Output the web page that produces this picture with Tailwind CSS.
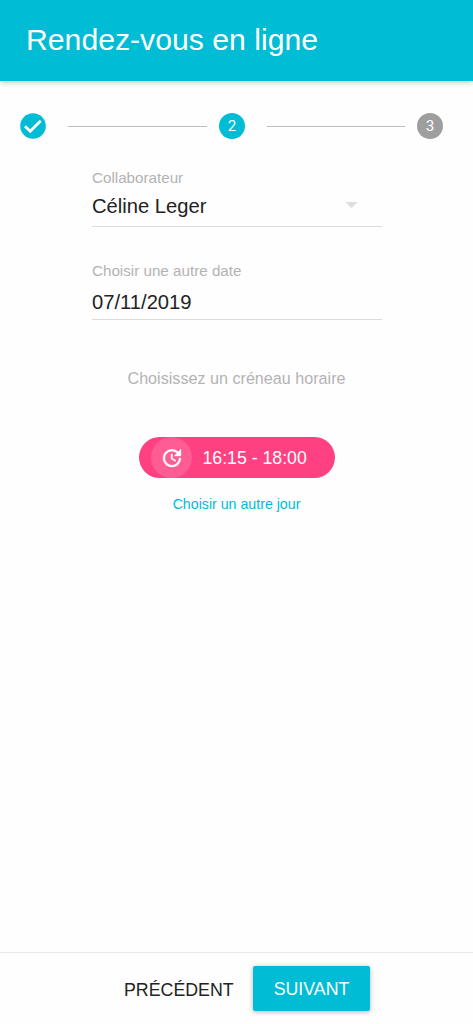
<!DOCTYPE html>
<html lang="fr">
<head>
<meta charset="utf-8">
<title>Rendez-vous en ligne</title>
<script src="https://cdn.jsdelivr.net/npm/@tailwindcss/browser@4"></script>
</head>
<body class="h-[1024px] w-[473px] overflow-hidden bg-[#fefefe] font-['Liberation_Sans',Arial,sans-serif] whitespace-nowrap">
<div class="flex h-full flex-col">
  <header class="h-[81px] shrink-0 bg-[#00bcd4] pl-[26px] pt-[20px] shadow-[0_1px_6px_rgba(0,0,0,0.25)]">
    <h1 class="text-[30.2px] leading-[39px] text-white">Rendez-vous en ligne</h1>
  </header>

  <div class="mt-[32px] flex h-[26px] shrink-0 items-center pl-5">
    <svg class="size-[26px]" viewBox="0 0 26 26"><circle cx="13" cy="13" r="12.8" fill="#00bcd4"/><path d="M5 13.200 10.200 18.200 20.700 7.700" fill="none" stroke="#fff" stroke-width="2.800"/></svg>
    <div class="ml-[22px] mt-px h-[1.5px] w-[139px] bg-[#bdbdbd]"></div>
    <div class="ml-3 flex size-[26px] items-center justify-center rounded-full bg-[#00bcd4] font-[Roboto,sans-serif] text-[15.2px] text-white">2</div>
    <div class="ml-[22px] mt-px h-[1.5px] w-[138px] bg-[#bdbdbd]"></div>
    <div class="ml-3 flex size-[26px] items-center justify-center rounded-full bg-[#9e9e9e] font-[Roboto,sans-serif] text-[15.2px] text-white">3</div>
  </div>

  <main class="flex grow flex-col items-center">
    <div class="ml-px mt-[28px] h-[60px] w-[290px] border-b border-[#dcdcdc]">
      <div class="h-[22px] text-[15.2px] leading-[22px] text-[#b3b3b3]">Collaborateur</div>
      <div class="mt-[3px] flex h-7 items-center justify-between text-[20.2px] leading-7 text-[#222]">
        <span>Céline Leger</span>
        <svg class="mr-6 -mt-[3px] h-[6px] w-[13px]" viewBox="0 0 13 6"><path d="M0.3 0h12.4L6.5 6z" fill="#dedede"/></svg>
      </div>
    </div>
    <div class="ml-px mt-[33px] h-[60px] w-[290px] border-b border-[#dcdcdc]">
      <div class="h-[22px] text-[15.2px] leading-[22px] text-[#b3b3b3]">Choisir une autre date</div>
      <div class="mt-[6px] text-[20.2px] leading-7 text-[#222]">07/11/2019</div>
    </div>
    <p class="mt-[46px] text-[16.15px] leading-6 text-[#b3b3b3]">Choisissez un créneau horaire</p>
    <button class="mt-[47px] flex h-[41px] w-[196px] shrink-0 items-center rounded-full bg-[#ff4081] pl-3 text-[17.7px] text-white">
      <span class="flex size-[41px] items-center justify-center rounded-full bg-[#ff5c94]">
        <svg class="ml-0.5 size-6" viewBox="0 0 24 24" fill="#fff" stroke="#fff" stroke-width="0.3"><path d="M21 10.120h-6.780l2.740-2.820c-2.730-2.700-7.150-2.800-9.880-.1-2.730 2.710-2.730 7.080 0 9.790s7.150 2.710 9.880 0C18.320 15.650 19 14.080 19 12.100h2c0 1.980-.88 4.550-2.640 6.290-3.510 3.480-9.210 3.480-12.720 0-3.500-3.470-3.530-9.110-.02-12.580s9.140-3.470 12.650 0L21 3v7.120zM12.500 8v4.250l3.500 2.080-.72 1.210L11 13V8h1.500z"/></svg>
      </span>
      <span class="ml-[11px] mt-px">16:15 - 18:00</span>
    </button>
    <a class="mt-[14px] text-[14.2px] leading-6 text-[#00bcd4]">Choisir un autre jour</a>
  </main>

  <footer class="flex h-[72px] shrink-0 items-start border-t border-[#e8e8e8] pl-[124px] pt-[13px] text-[17.8px]">
    <button class="mt-[2px] h-[45px] w-[109px] text-[#222]">PRÉCÉDENT</button>
    <button class="ml-[20px] h-[45px] w-[117px] rounded-[2px] bg-[#00bcd4] pt-0.5 text-white shadow-[0_1px_5px_rgba(0,0,0,0.3)]">SUIVANT</button>
  </footer>
</div>
</body>
</html>
